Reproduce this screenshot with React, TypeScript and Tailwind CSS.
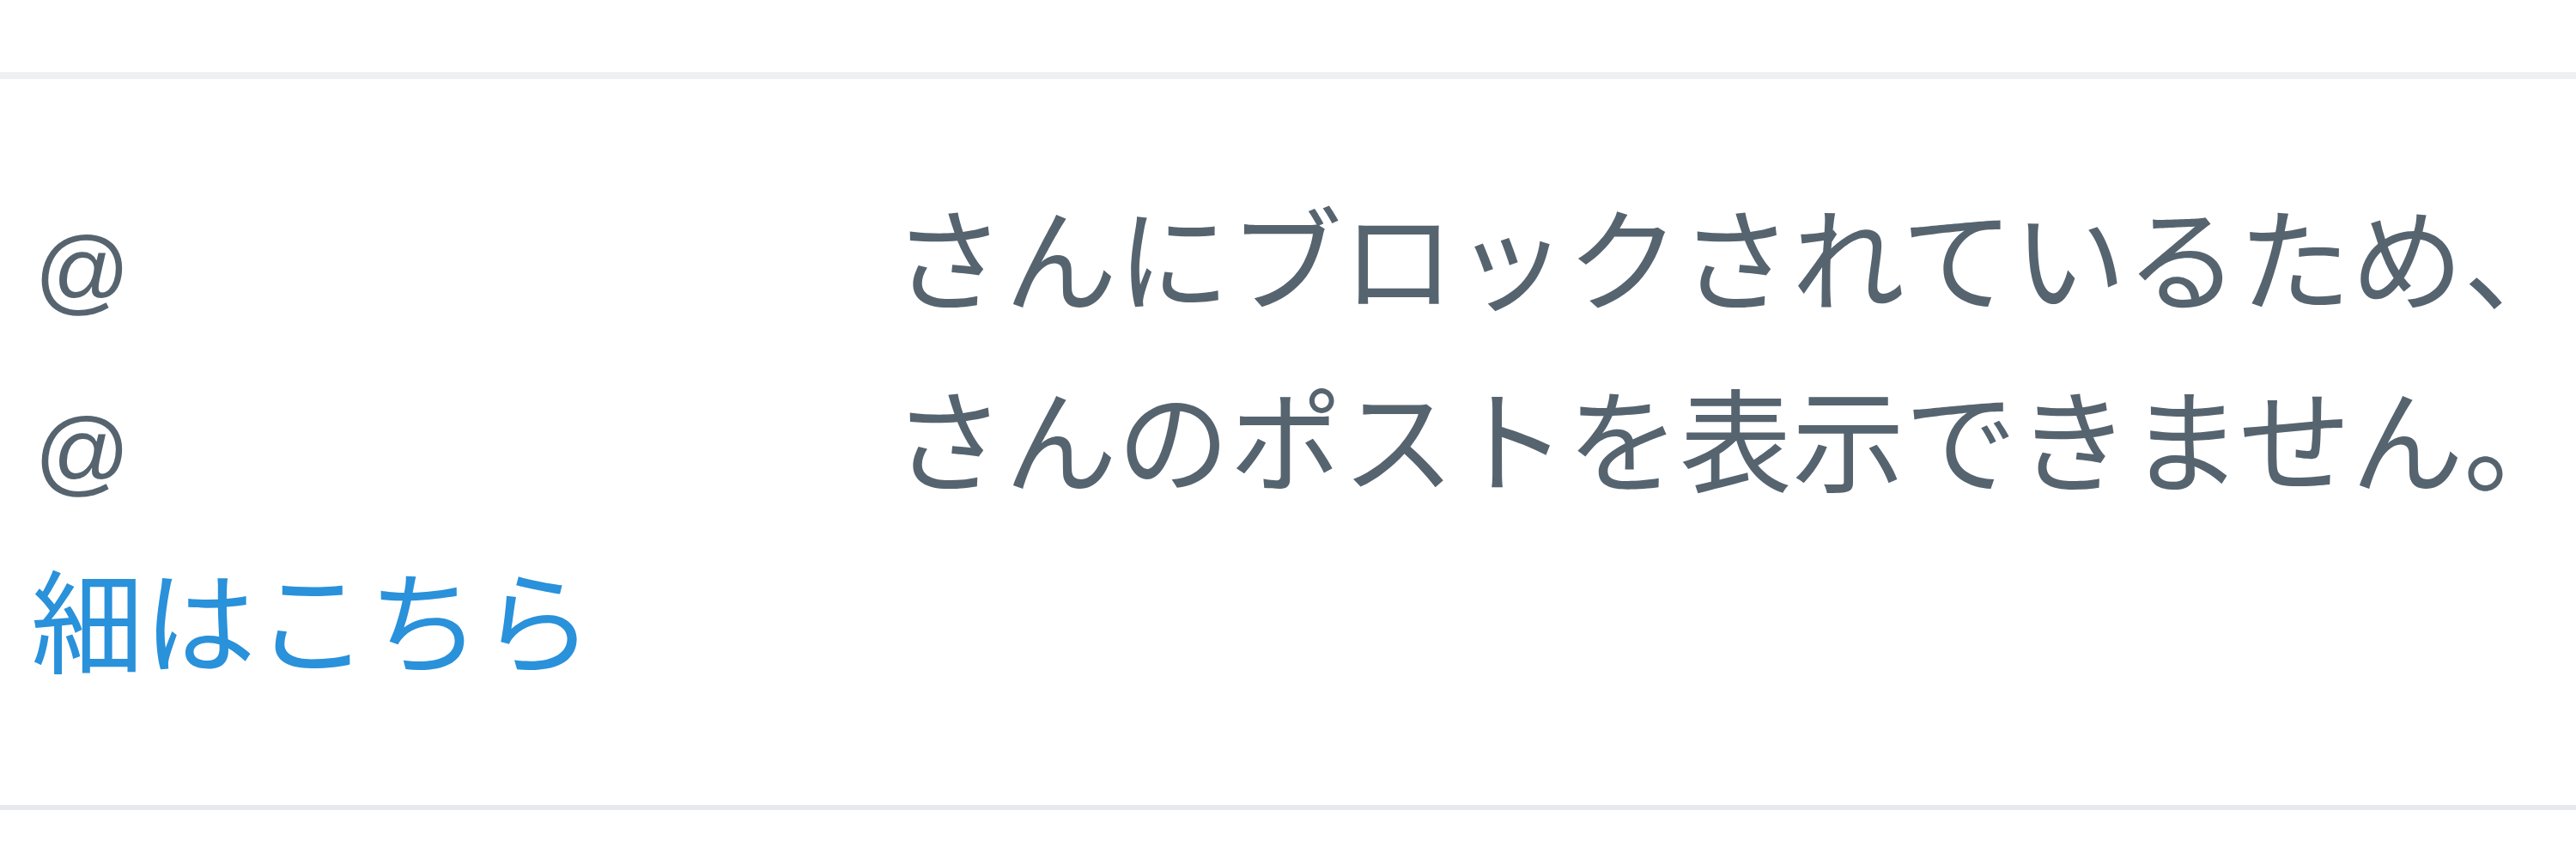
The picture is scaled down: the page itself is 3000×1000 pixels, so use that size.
import React from 'react';

const jp = { fontFamily: '"Noto Sans CJK JP", "Noto Sans", sans-serif' };
const latin = { fontFamily: '"Liberation Sans", Arial, sans-serif' };

// 非表示のユーザー名の欄（@ のあとは空白のまま）
const Handle: React.FC = () => (
    <span className="inline-block w-[999px] text-[110px] leading-none align-baseline" style={latin}>@</span>
);

const BlockedNotice: React.FC = () => {
    return (
        <div className="border-t-[8px] border-b-[6px] border-t-[#eef0f2] border-b-[#e8e8ef] pt-[98px] pb-[114px] pl-[40px]">
            <div className="text-[131px] leading-[211px] text-[#56646f]" style={jp}>
                <div className="whitespace-nowrap">
                    <Handle />
                    <span>さんにブロックされているため、</span>
                </div>
                <div className="whitespace-nowrap">
                    <Handle />
                    <span>さんのポストを表示できません。</span>
                </div>
                <div className="whitespace-nowrap -ml-[4px]">
                    <a className="text-[#2a91db]">細はこちら</a>
                </div>
            </div>
        </div>
    );
};

export default function App() {
    return (
        <div className="w-[3000px] h-[1000px] bg-white pt-[84px] overflow-hidden">
            <BlockedNotice />
        </div>
    );
}
